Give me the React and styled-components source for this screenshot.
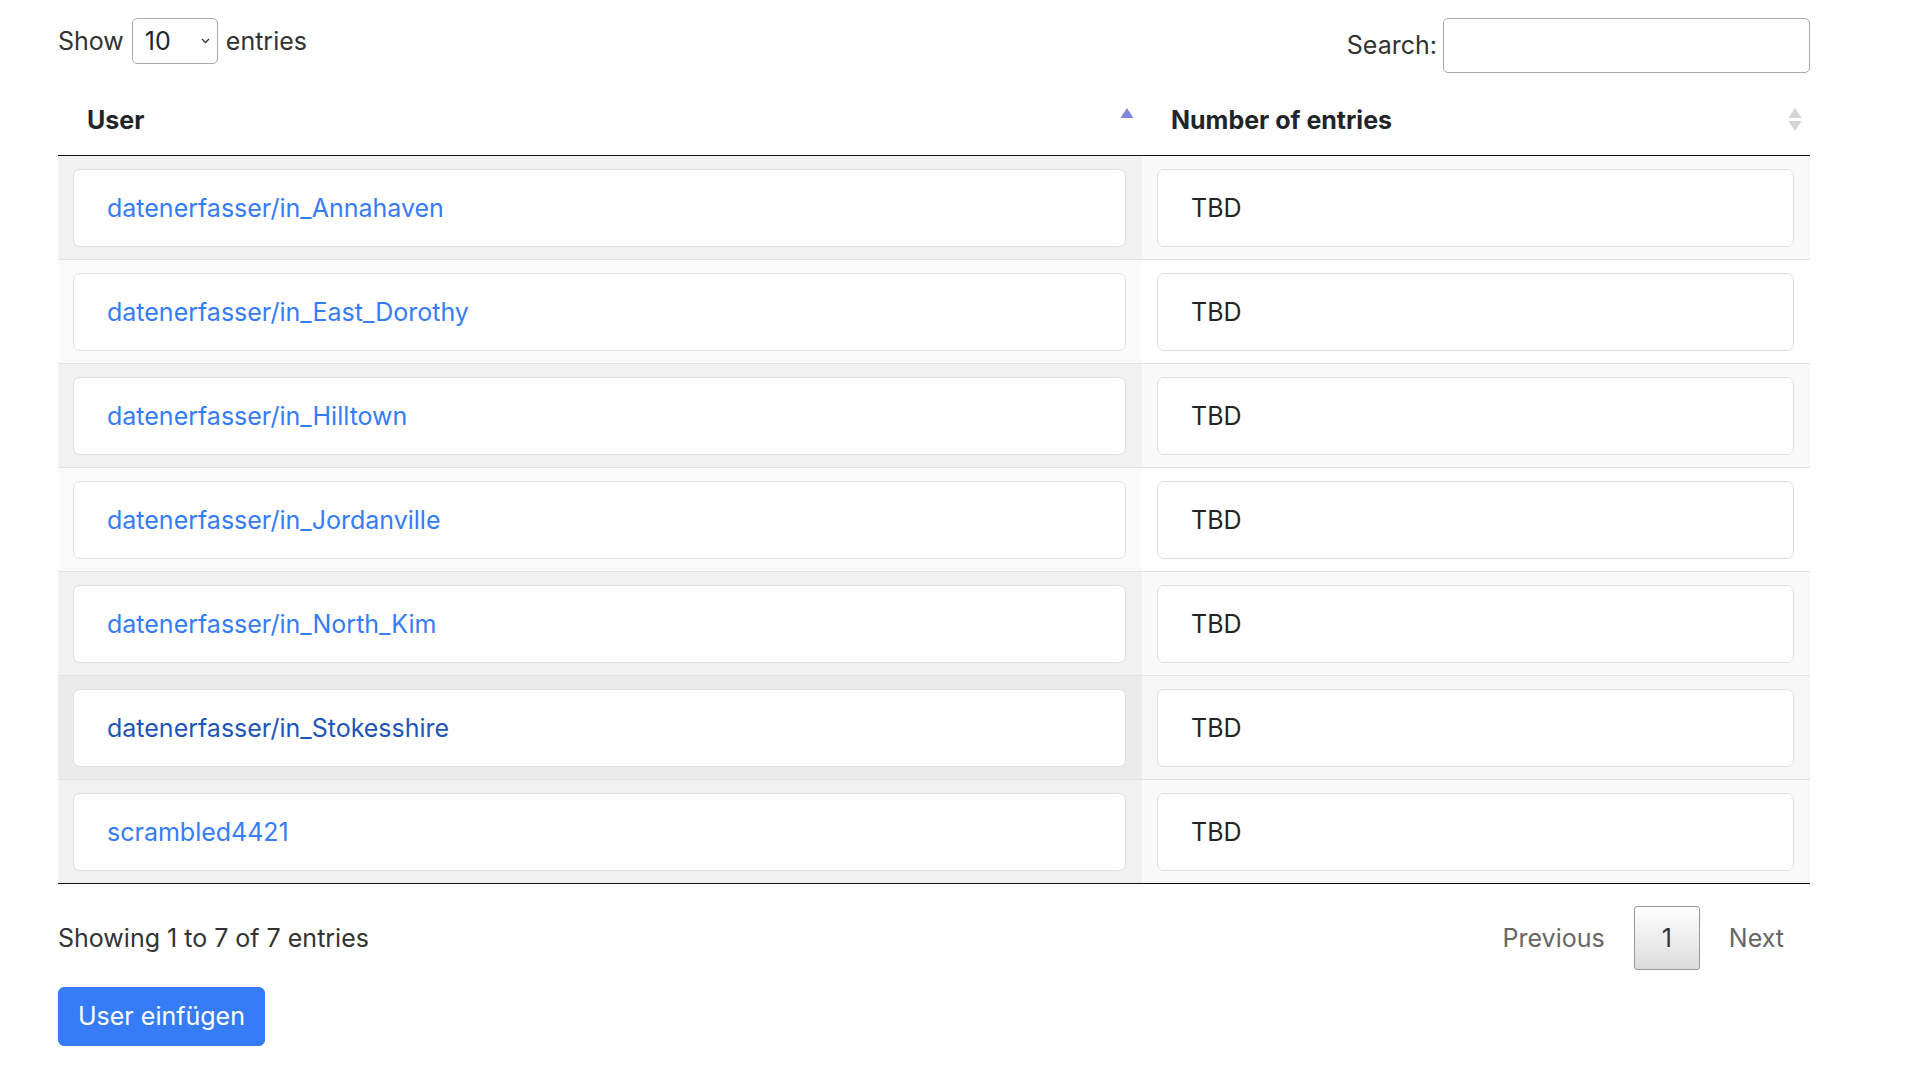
import React from "react";
import styled, { createGlobalStyle } from "styled-components";

const GlobalStyle = createGlobalStyle`
  body {
    margin: 0;
    background: #fff;
    font-family: Inter, "Liberation Sans", sans-serif;
    font-size: 25px;
    line-height: 38.4px;
    color: #212529;
  }
`;

const users = [
  "datenerfasser/in_Annahaven",
  "datenerfasser/in_East_Dorothy",
  "datenerfasser/in_Hilltown",
  "datenerfasser/in_Jordanville",
  "datenerfasser/in_North_Kim",
  "datenerfasser/in_Stokesshire",
  "scrambled4421",
];

const HOVER_ROW = 5;

function SortIcon({ up, down }) {
  return (
    <svg width="14" height="24" viewBox="0 0 14 24">
      <polygon points="7,0 13.5,10 0.5,10" fill={up} />
      <polygon points="0.5,13 13.5,13 7,23" fill={down} />
    </svg>
  );
}

function Chevron() {
  return (
    <svg width="9" height="6" viewBox="0 0 9 6">
      <path d="M1 1l3.5 3.5L8 1" fill="none" stroke="#333" strokeWidth="1.3" />
    </svg>
  );
}

function App() {
  return (
    <Page>
      <GlobalStyle />
      <TopBar>
        <LengthControl>
          Show
          <SelectBox>
            <span>10</span>
            <Chevron />
          </SelectBox>
          entries
        </LengthControl>
        <SearchControl>
          Search:
          <SearchInput type="search" />
        </SearchControl>
      </TopBar>

      <Table>
        <colgroup>
          <col style={{ width: 1084 }} />
          <col style={{ width: 668 }} />
        </colgroup>
        <thead>
          <tr>
            <Th>
              <HeadInner>
                <span>User</span>
                <SortIcon up="#7f86dd" down="transparent" />
              </HeadInner>
            </Th>
            <Th>
              <HeadInner>
                <span>Number of entries</span>
                <SortIcon up="#d4d4d4" down="#d4d4d4" />
              </HeadInner>
            </Th>
          </tr>
        </thead>
        <tbody>
          {users.map((name, i) => {
            const odd = i % 2 === 0;
            const hover = i === HOVER_ROW;
            return (
              <Row key={name} $first={i === 0}>
                <Td $odd={odd} $hover={hover} $sorted>
                  <Card>
                    <UserLink href="#" $hover={hover}>{name}</UserLink>
                  </Card>
                </Td>
                <Td $odd={odd} $hover={hover}>
                  <Card>TBD</Card>
                </Td>
              </Row>
            );
          })}
        </tbody>
      </Table>

      <Footer>
        <Info>Showing 1 to 7 of 7 entries</Info>
        <Pagination>
          <PageButton>Previous</PageButton>
          <PageButton $current>1</PageButton>
          <PageButton>Next</PageButton>
        </Pagination>
      </Footer>

      <PrimaryButton type="button">User einfügen</PrimaryButton>
    </Page>
  );
}

const Page = styled.div`
  width: 1752px;
  padding: 18px 0 40px 58px;
`;

const TopBar = styled.div`
  display: flex;
  justify-content: space-between;
  align-items: flex-start;
  height: 66px;
  color: #333;
`;

const LengthControl = styled.label`
  display: flex;
  align-items: center;
  gap: 8px;
  height: 46px;
`;

const SelectBox = styled.div`
  width: 86px;
  height: 46px;
  box-sizing: border-box;
  display: flex;
  align-items: center;
  justify-content: space-between;
  padding: 0 7px 0 12px;
  border: 1px solid #aaa;
  border-radius: 5px;
  background: #fff;
  color: #212529;
`;

const SearchControl = styled.label`
  display: flex;
  align-items: center;
  gap: 6px;
  height: 55px;
`;

const SearchInput = styled.input`
  width: 367px;
  height: 55px;
  box-sizing: border-box;
  border: 1px solid #aaa;
  border-radius: 5px;
  background: #fff;
  font: inherit;
  outline: none;
`;

const Table = styled.table`
  width: 1752px;
  table-layout: fixed;
  border-collapse: collapse;
  border-bottom: 1px solid #111;
`;

const Th = styled.th`
  padding: 17px 8px 16px 29px;
  text-align: left;
  font-weight: 700;
  color: #212529;
  border-bottom: 1px solid #111;
`;

const HeadInner = styled.div`
  display: flex;
  align-items: center;
  justify-content: space-between;
`;

const Row = styled.tr`
  border-top: ${(p) => (p.$first ? "none" : "1px solid #e2e2e2")};
`;

const cellBg = ({ $odd, $hover, $sorted }) => {
  if ($hover) return $sorted ? "#ebebeb" : "#f6f6f6";
  if ($odd) return $sorted ? "#f1f1f1" : "#f9f9f9";
  return $sorted ? "#fafafa" : "#ffffff";
};

const Td = styled.td`
  padding: 13px 16px 12px 15px;
  background: ${cellBg};
`;

const Card = styled.div`
  height: 78px;
  box-sizing: border-box;
  display: flex;
  align-items: center;
  padding: 0 33px;
  background: #fff;
  border: 1px solid #e0e0e0;
  border-radius: 7px;
`;

const UserLink = styled.a`
  color: ${(p) => (p.$hover ? "#1f55b6" : "#367cf6")};
  text-decoration: none;
`;

const Footer = styled.div`
  display: flex;
  justify-content: space-between;
  align-items: center;
  padding-top: 22px;
`;

const Info = styled.div`
  color: #333;
`;

const Pagination = styled.div`
  display: flex;
  align-items: center;
`;

const PageButton = styled.span`
  display: inline-block;
  margin-left: 3px;
  padding: 12px ${(p) => (p.$current ? "27px" : "25px")};
  line-height: 38px;
  border: 1px solid ${(p) => (p.$current ? "#979797" : "transparent")};
  border-radius: 3px;
  color: ${(p) => (p.$current ? "#333" : "#666")};
  background: ${(p) =>
    p.$current ? "linear-gradient(to bottom, #fff 0%, #dcdcdc 100%)" : "transparent"};
`;

const PrimaryButton = styled.button`
  margin-top: 17px;
  padding: 9px 19px;
  font: inherit;
  line-height: 38.4px;
  color: #fff;
  background: #367cf6;
  border: 1px solid #367cf6;
  border-radius: 6px;
`;

export default App;
